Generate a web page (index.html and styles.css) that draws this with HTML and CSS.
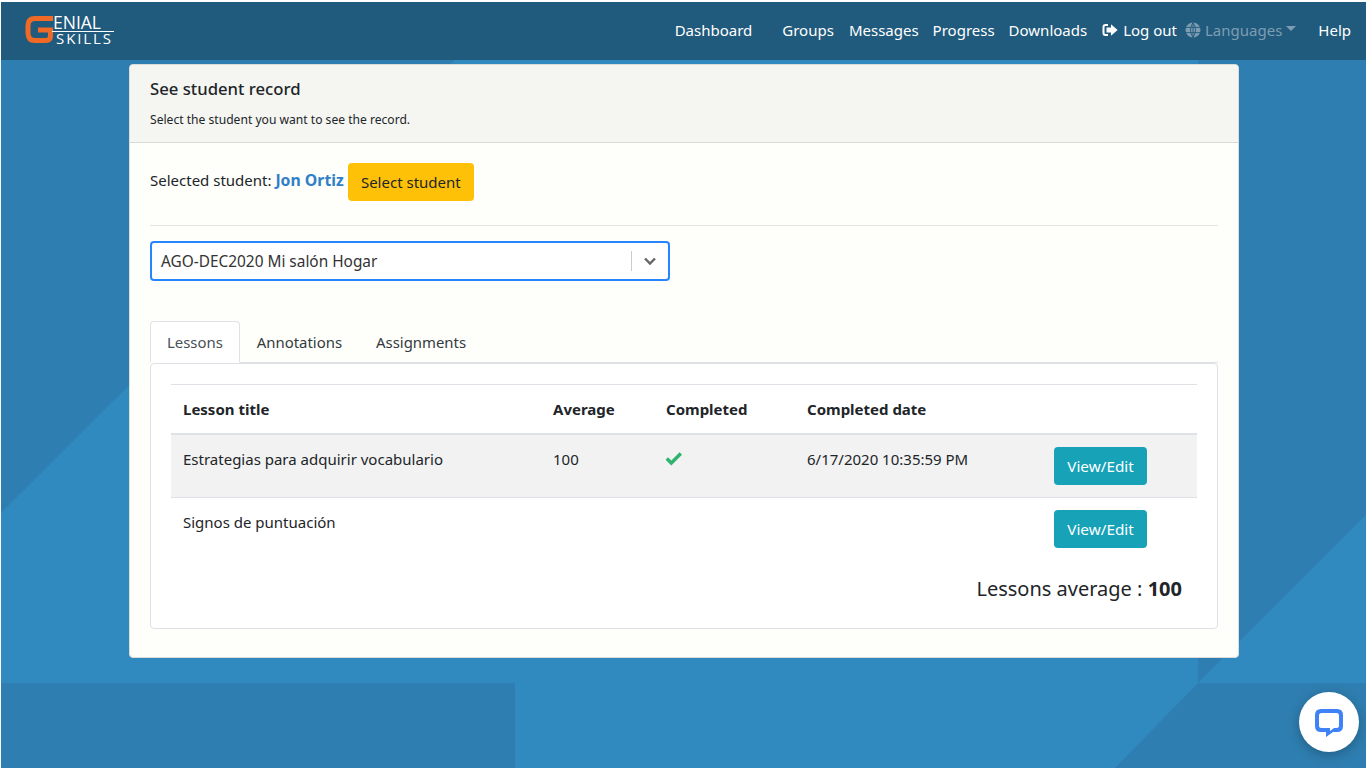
FILE: index.html
```html
<!DOCTYPE html>
<html lang="en">
<head>
<meta charset="utf-8">
<title>See student record</title>
<link rel="stylesheet" href="styles.css">
</head>
<body>
<div class="page">
  <svg class="backdrop" width="1365" height="766" viewBox="0 0 1365 766" aria-hidden="true">
    <polygon class="shade" points="0,58 454,58 0,511"/>
    <polygon class="shade" points="1197,58 1365,58 1365,513 1197,681"/>
    <polygon class="shade" points="0,681 514,681 514,766 0,766"/>
    <polygon class="shade" points="1197,681 1365,681 1365,766 1114,766"/>
  </svg>

  <nav class="navbar">
    <a class="brand" href="#" aria-label="Genial Skills">
      <svg class="logo-mark" width="32" height="32" viewBox="0 0 32 32">
        <path class="logo-g" d="M31 4.500H13Q6 4.500 6 11.500V19Q6 26.500 13 26.500H24Q28.500 26.500 28.500 22V16H16"/>
      </svg>
      <span class="logo-words">
        <span class="logo-top">ENIAL</span>
        <span class="logo-rule"></span>
        <span class="logo-bottom">SKILLS</span>
      </span>
    </a>
    <ul class="nav-links">
      <li class="nav-dashboard"><a href="#">Dashboard</a></li>
      <li class="nav-groups"><a href="#">Groups</a></li>
      <li class="nav-messages"><a href="#">Messages</a></li>
      <li class="nav-progress"><a href="#">Progress</a></li>
      <li class="nav-downloads"><a href="#">Downloads</a></li>
      <li class="nav-logout"><a href="#">
        <svg width="16" height="14" viewBox="0 0 16 14">
          <path class="logout-door" d="M6 2H3.500Q1.500 2 1.500 4V10Q1.500 12 3.500 12H6"/>
          <path class="logout-arrow" d="M9 1.200L15.600 7L9 12.800V9.500H4.500V4.500H9Z"/>
        </svg>
        Log out</a></li>
      <li class="nav-lang"><a href="#">
        <svg width="16" height="16" viewBox="0 0 16 16">
          <circle class="globe-fill" cx="8" cy="8" r="7.500"/>
          <path class="globe-lines" d="M0.500 5.400H15.500M0.500 10.600H15.500M8 0.500V15.500M8 0.500Q3 8 8 15.500M8 0.500Q13 8 8 15.500"/>
        </svg>
        Languages<span class="caret"></span></a></li>
      <li class="nav-help"><a href="#">Help</a></li>
    </ul>
  </nav>

  <main class="card">
    <header class="card-header">
      <h1 class="card-title">See student record</h1>
      <p class="card-sub">Select the student you want to see the record.</p>
    </header>
    <div class="card-body">
      <div class="student-row">
        <span class="student-label">Selected student: <a class="student-name" href="#">Jon Ortiz</a></span>
        <button class="btn btn-select" type="button">Select student</button>
      </div>
      <hr class="divider">
      <div class="select-box">
        <span class="select-value">AGO-DEC2020 Mi salón Hogar</span>
        <span class="select-sep"></span>
        <svg class="select-chevron" width="14" height="10" viewBox="0 0 14 10">
          <path d="M2 2.500L7 7.500L12 2.500"/>
        </svg>
      </div>
      <ul class="tabs">
        <li class="tab tab-active">Lessons</li>
        <li class="tab">Annotations</li>
        <li class="tab">Assignments</li>
      </ul>
      <section class="tab-pane">
        <table class="lessons">
          <colgroup>
            <col class="col-title"><col class="col-avg"><col class="col-done"><col class="col-date"><col class="col-action">
          </colgroup>
          <thead>
            <tr><th>Lesson title</th><th>Average</th><th>Completed</th><th>Completed date</th><th></th></tr>
          </thead>
          <tbody>
            <tr class="row-striped">
              <td>Estrategias para adquirir vocabulario</td>
              <td>100</td>
              <td><svg class="check" width="18" height="15" viewBox="0 0 18 15"><path d="M1.800 7.500L6.300 12L15.800 2.500"/></svg></td>
              <td>6/17/2020 10:35:59 PM</td>
              <td><button class="btn btn-view" type="button">View/Edit</button></td>
            </tr>
            <tr>
              <td>Signos de puntuación</td>
              <td></td>
              <td></td>
              <td></td>
              <td><button class="btn btn-view" type="button">View/Edit</button></td>
            </tr>
          </tbody>
        </table>
        <p class="average">Lessons average : <strong>100</strong></p>
      </section>
    </div>
  </main>

  <button class="chat" type="button" aria-label="Chat">
    <svg width="30" height="30" viewBox="0 0 30 30">
      <path fill-rule="evenodd" d="M7 1H23Q29 1 29 7V18Q29 24 23 24H19L12 29V24H7Q1 24 1 18V7Q1 1 7 1ZM7.500 5Q5 5 5 7.500V17.500Q5 20 7.500 20H16V23L20 20H22.500Q25 20 25 17.500V7.500Q25 5 22.500 5Z"/>
    </svg>
  </button>
</div>
</body>
</html>
```
FILE: styles.css
```css
* { box-sizing: border-box; }
html, body { height: 100%; }
body {
  margin: 0;
  padding: 2px 0 0 1px;
  background: #fff;
  font-family: "Noto Sans", "Open Sans", "Liberation Sans", sans-serif;
  font-size: 15px;
  line-height: 1.5;
  color: #212529;
  overflow: hidden;
}
a { color: inherit; text-decoration: none; }
ul { list-style: none; margin: 0; padding: 0; }

.page {
  position: relative;
  height: 766px;
  background: #318abf;
  overflow: hidden;
}
.backdrop { position: absolute; left: 0; top: 0; }
.shade { fill: #2e7eb1; }

.navbar {
  position: relative;
  height: 58px;
  background: #205a7c;
  display: flex;
  align-items: center;
  justify-content: space-between;
}
.brand {
  display: flex;
  align-items: flex-start;
  margin: 0 0 2px 21px;
  height: 32px;
}
.logo-mark { display: block; }
.logo-g { fill: none; stroke: #f06a25; stroke-width: 5; }
.logo-words {
  display: flex;
  flex-direction: column;
  width: 62px;
  margin: 1px 0 0 -2px;
  color: #fff;
  font-family: "Open Sans", "Liberation Sans", sans-serif;
  font-weight: 400;
}
.logo-top {
  padding-left: 1px;
  font-size: 17.500px;
  line-height: 14px;
}
.logo-rule {
  height: 1px;
  margin: 2px 0 1px;
  background: #fff;
}
.logo-bottom {
  padding-left: 4px;
  font-size: 15px;
  line-height: 11px;
  letter-spacing: 1.900px;
  white-space: nowrap;
}

.nav-links {
  display: flex;
  align-items: center;
  color: #fff;
  font-size: 15px;
  margin-right: 15px;
  padding-bottom: 2px;
}
.nav-links a { display: flex; align-items: center; white-space: nowrap; }
.nav-groups { margin-left: 30px; }
.nav-messages { margin-left: 15px; }
.nav-progress { margin-left: 14px; }
.nav-downloads { margin-left: 14px; }
.nav-logout { margin-left: 15px; }
.nav-logout svg { margin-right: 5px; }
.nav-lang { margin-left: 8px; color: #7e9db2; }
.nav-lang svg { margin-right: 4px; }
.nav-help { margin-left: 22px; }
.logout-door { fill: none; stroke: #fff; stroke-width: 2; }
.logout-arrow { fill: #fff; }
.globe-fill { fill: #7e9db2; }
.globe-lines { fill: none; stroke: #205a7c; stroke-width: 0.9; }
.caret {
  width: 0;
  height: 0;
  margin: 0 0 3px 4px;
  border-top: 5px solid currentColor;
  border-left: 5px solid transparent;
  border-right: 5px solid transparent;
}

.card {
  position: relative;
  width: 1110px;
  height: 594px;
  margin: 4px 0 0 128px;
  background: #fefefa;
  border: 1px solid #dcdcd8;
  border-radius: 4px;
  overflow: hidden;
}
.card-header {
  height: 78px;
  padding: 11px 20px 0;
  background: #f5f5f1;
  border-bottom: 1px solid #d9d9d6;
}
.card-title {
  margin: 0;
  font-size: 16.700px;
  font-weight: 500;
  line-height: 26px;
}
.card-sub {
  margin: 9px 0 0;
  font-size: 12.100px;
  line-height: 18px;
}
.card-body { padding: 20px; }

.student-row { display: flex; align-items: flex-start; height: 38px; }
.student-label { line-height: 35px; }
.student-name { color: #2f80c8; font-size: 15.800px; font-weight: 700; }
.btn {
  border: 0;
  border-radius: 4px;
  font: inherit;
  height: 38px;
  padding: 1px 0 0;
}
.btn-select {
  width: 126px;
  margin-left: 4px;
  background: #ffc107;
  color: #212529;
}
.divider {
  margin: 24px 0 15px;
  border: 0;
  border-top: 1px solid #e4e4e1;
}
.select-box {
  display: flex;
  align-items: center;
  width: 520px;
  height: 40px;
  background: #fff;
  border: 2px solid #2684ff;
  border-radius: 4px;
  padding-left: 9px;
}
.select-value { flex: 1; padding-top: 1px; color: #333; font-size: 15.400px; }
.select-sep { width: 1px; height: 20px; background: #ccc; }
.select-chevron { margin: 0 11px 0 11px; }
.select-chevron path { fill: none; stroke: #666; stroke-width: 2.400; }

.tabs {
  display: flex;
  height: 42px;
  margin-top: 40px;
  border-bottom: 1px solid #dee2e6;
  font-size: 14.900px;
}
.tab {
  height: 42px;
  padding: 0 16px;
  line-height: 40px;
  color: #343a40;
  border: 1px solid transparent;
}
.tab-active {
  color: #495057;
  background: #fff;
  border-color: #dee2e6 #dee2e6 #fff;
  border-radius: 4px 4px 0 0;
}
.tab-pane {
  height: 266px;
  padding: 20px;
  background: #fff;
  border: 1px solid #dee2e6;
  border-radius: 4px;
}
.lessons {
  width: 1026px;
  table-layout: fixed;
  border-collapse: collapse;
}
.col-title { width: 370px; }
.col-avg { width: 113px; }
.col-done { width: 141px; }
.col-date { width: 247px; }
.col-action { width: 155px; }
.lessons th {
  height: 49px;
  padding: 0 12px;
  text-align: left;
  font-weight: 700;
  border-top: 1px solid #dee2e6;
  border-bottom: 2px solid #dee2e6;
}
.lessons td {
  height: 63px;
  padding: 12px;
  vertical-align: top;
  line-height: 25px;
  border-bottom: 1px solid #dee2e6;
}
.lessons tbody tr:last-child td { border-bottom: 0; }
.row-striped td { background: #f2f2f2; }
.check { display: block; margin: 4px 0 0 -1px; }
.check path { fill: none; stroke: #2fb36f; stroke-width: 3.400; }
.btn-view {
  display: block;
  width: 93px;
  background: #17a2b8;
  color: #fff;
  font-size: 15.300px;
}
.average {
  margin: 15px 15px 0 0;
  text-align: right;
  font-size: 20px;
  line-height: 28px;
}
.average strong { font-weight: 700; }

.chat {
  position: absolute;
  left: 1298px;
  top: 690px;
  width: 60px;
  height: 60px;
  padding: 2px 0 0;
  border: 0;
  border-radius: 50%;
  background: #fff;
  box-shadow: 0 3px 12px rgba(0, 0, 0, 0.25);
  display: flex;
  align-items: center;
  justify-content: center;
}
.chat svg { display: block; fill: #3f82f7; }
```
